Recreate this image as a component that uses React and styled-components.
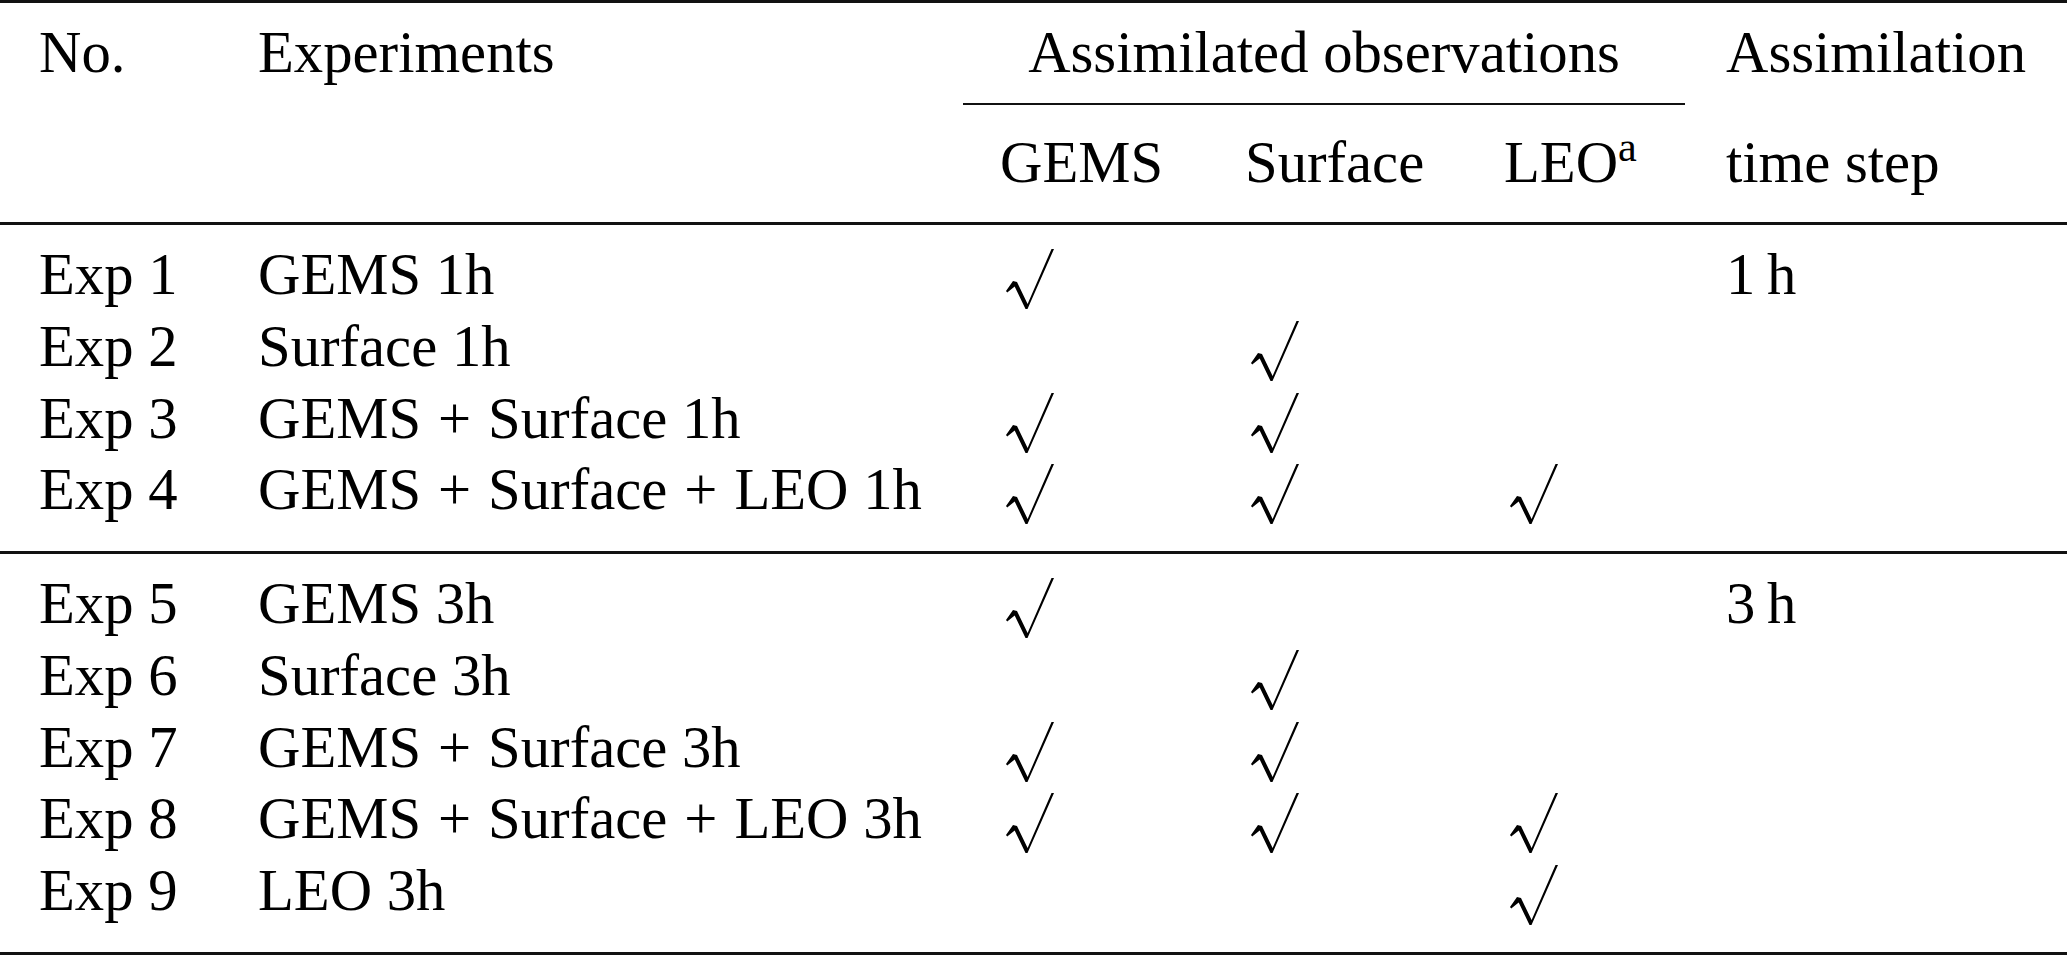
import React from 'react';
import styled, { createGlobalStyle } from 'styled-components';

const GlobalStyle = createGlobalStyle`
  html, body {
    margin: 0;
    padding: 0;
    background: #ffffff;
  }
`;

// column tracks shared by header and body so everything lines up
const COLS = '219px 742px 245px 259px 222px 1fr';

const Page = styled.div`
  width: 2067px;
  font-family: "Liberation Serif", "Times New Roman", serif;
  font-size: 58.7px;
  color: #000;
`;

const Rule = styled.div`
  height: ${({ $h }) => $h}px;
  background: #111;
`;

const Grid = styled.div`
  display: grid;
  grid-template-columns: ${COLS};
`;

const Section = styled(Grid)`
  padding: 14.35px 0 25px;
`;

const Cell = styled.div`
  padding-left: 39px;
  line-height: 71.67px;
  white-space: nowrap;
`;

const HeadCell = styled(Cell)`
  padding-top: ${({ $row }) => ($row === 1 ? '14.35px' : '22.35px')};
  padding-bottom: ${({ $row }) => ($row === 1 ? '16px' : '23px')};
`;

const GroupHead = styled.div`
  grid-column: 3 / 6;
  margin: 0 2px;
  padding: 14.35px 0 14px;
  line-height: 71.67px;
  text-align: center;
  white-space: nowrap;
  border-bottom: 2px solid #111;
`;

const Sup = styled.sup`
  font-size: 0.72em;
  line-height: 0;
  vertical-align: 0.5em;
`;

const Plus = styled.span`
  margin: 0 2.3px;
`;

const CheckSvg = styled.svg`
  display: inline-block;
  width: 48px;
  height: 60px;
  margin-left: 6px;
  vertical-align: -15px;
`;

function Check() {
  return (
    <CheckSvg viewBox="0 0 48 60" aria-label="√">
      <polygon
        fill="#000"
        points="0,42 7,32 11,33 21.6,55 45.5,0 48,0 21.5,60 19.5,60 8.7,37.5 1.2,43.5"
      />
    </CheckSvg>
  );
}

// "GEMS + Surface" -> plus signs get a touch of math spacing
function Name({ text }) {
  const parts = text.split(' + ');
  return parts.map((p, i) => (
    <React.Fragment key={i}>
      {i > 0 && (
        <>
          {' '}
          <Plus>+</Plus>{' '}
        </>
      )}
      {p}
    </React.Fragment>
  ));
}

const firstBlock = [
  { no: 'Exp 1', name: 'GEMS 1h', obs: [1, 0, 0], step: '1\u2009h' },
  { no: 'Exp 2', name: 'Surface 1h', obs: [0, 1, 0] },
  { no: 'Exp 3', name: 'GEMS + Surface 1h', obs: [1, 1, 0] },
  { no: 'Exp 4', name: 'GEMS + Surface + LEO 1h', obs: [1, 1, 1] },
];

const secondBlock = [
  { no: 'Exp 5', name: 'GEMS 3h', obs: [1, 0, 0], step: '3\u2009h' },
  { no: 'Exp 6', name: 'Surface 3h', obs: [0, 1, 0] },
  { no: 'Exp 7', name: 'GEMS + Surface 3h', obs: [1, 1, 0] },
  { no: 'Exp 8', name: 'GEMS + Surface + LEO 3h', obs: [1, 1, 1] },
  { no: 'Exp 9', name: 'LEO 3h', obs: [0, 0, 1] },
];

function Block({ rows }) {
  return (
    <Section>
      {rows.map((r) => (
        <React.Fragment key={r.no}>
          <Cell>{r.no}</Cell>
          <Cell>
            <Name text={r.name} />
          </Cell>
          {r.obs.map((on, i) => (
            <Cell key={i}>{on ? <Check /> : null}</Cell>
          ))}
          <Cell>{r.step || ''}</Cell>
        </React.Fragment>
      ))}
    </Section>
  );
}

export default function App() {
  return (
    <>
      <GlobalStyle />
      <Page>
        <Rule $h={3} />
        <Grid>
          <HeadCell $row={1}>No.</HeadCell>
          <HeadCell $row={1}>Experiments</HeadCell>
          <GroupHead>Assimilated observations</GroupHead>
          <HeadCell $row={1}>Assimilation</HeadCell>

          <HeadCell $row={2} />
          <HeadCell $row={2} />
          <HeadCell $row={2}>GEMS</HeadCell>
          <HeadCell $row={2}>Surface</HeadCell>
          <HeadCell $row={2}>
            LEO<Sup>a</Sup>
          </HeadCell>
          <HeadCell $row={2}>time step</HeadCell>
        </Grid>
        <Rule $h={3} />
        <Block rows={firstBlock} />
        <Rule $h={3} />
        <Block rows={secondBlock} />
        <Rule $h={3} />
      </Page>
    </>
  );
}
